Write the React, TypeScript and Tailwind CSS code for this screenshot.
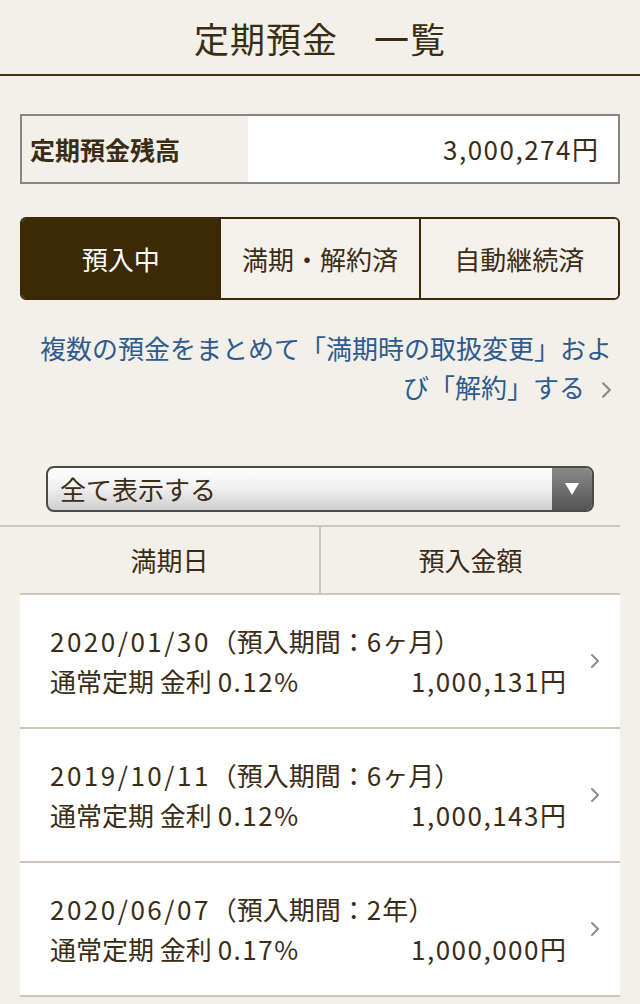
const font = {
  fontFamily: '"Noto Sans CJK JP", "Noto Sans", sans-serif',
};

const ROWS = [
  { date: '2020/01/30', term: '6', unit: 'ヶ月', rate: '0.12%', amount: '1,000,131' },
  { date: '2019/10/11', term: '6', unit: 'ヶ月', rate: '0.12%', amount: '1,000,143' },
  { date: '2020/06/07', term: '2', unit: '年', rate: '0.17%', amount: '1,000,000' },
];

function Chevron({ className }: { className?: string }) {
  return (
    <svg viewBox="0 0 10 16" className={className} fill="none">
      <path d="M2 2l6 6-6 6" stroke="#8c8c8c" strokeWidth="2" strokeLinecap="round" strokeLinejoin="round" />
    </svg>
  );
}

export default function App() {
  return (
    <div
      className="min-h-[1004px] w-[640px] bg-[#f3f0ea] text-[#3b2c15] antialiased"
      style={font}
    >
      {/* title */}
      <header className="flex h-[74px] items-center justify-center text-[35px] leading-none tracking-[1px]">
        定期預金　一覧
      </header>
      <div className="h-[2px] bg-[#4a3313]" />

      {/* balance */}
      <div className="mx-[20px] mt-[38px] flex h-[70px] border-2 border-[#8a8580]">
        <div className="flex w-[226px] items-center pl-[8px] text-[25px] font-bold leading-none">
          定期預金残高
        </div>
        <div className="flex flex-1 items-center justify-end bg-white pr-[20px] text-[26px] leading-none">
          <span className="tracking-[1.5px]">3,000,274</span>円
        </div>
      </div>

      {/* tabs */}
      <div className="mx-[20px] mt-[33px] flex h-[83px] overflow-hidden rounded-[6px] border-2 border-[#3a2806] text-[26px] leading-none">
        <div className="flex flex-1 items-center justify-center bg-[#3b2a05] text-white">預入中</div>
        <div className="flex flex-1 items-center justify-center border-l-2 border-[#3a2806] bg-[#f5f2ec]">
          満期・解約済
        </div>
        <div className="flex flex-1 items-center justify-center border-l-2 border-[#3a2806] bg-[#f5f2ec]">
          自動継続済
        </div>
      </div>

      {/* link */}
      <p className="ml-[34px] mr-[28px] mt-[28px] text-right text-[26px] leading-[39px] text-[#2e5b8f]">
        複数の預金をまとめて「満期時の取扱変更」および「解約」する
        <Chevron className="ml-[16px] inline-block h-[18px] w-[11px] align-[-1px]" />
      </p>

      {/* select */}
      <div className="mx-[46px] mt-[60px] flex h-[46px] overflow-hidden rounded-[8px] border-2 border-[#4a4a4a] bg-gradient-to-b from-white via-[#eeeeee] to-[#cfcfcf]">
        <div className="flex flex-1 items-center pl-[12px] text-[26px] leading-none">全て表示する</div>
        <div className="flex w-[40px] items-center justify-center bg-gradient-to-b from-[#8a8a8a] to-[#555555]">
          <svg viewBox="0 0 14 12" className="h-[12px] w-[14px]">
            <path d="M0 0h14L7 12z" fill="#fff" />
          </svg>
        </div>
      </div>

      {/* table header */}
      <div className="mr-[20px] mt-[13px] border-t-2 border-[#cdc6bb]">
        <div className="ml-[20px] flex h-[66px] text-[26px] leading-none">
          <div className="flex flex-1 items-center justify-center border-r-2 border-[#cdc6bb]">満期日</div>
          <div className="flex flex-1 items-center justify-center">預入金額</div>
        </div>
      </div>

      {/* rows */}
      <ul className="mx-[20px] border-t-2 border-[#cdc6bb]">
        {ROWS.map((r) => (
          <li
            key={r.date}
            className="flex h-[134px] items-center border-b-2 border-[#cdc6bb] bg-white pl-[30px] pr-[20px] text-[26px]"
          >
            <div className="flex-1 pr-[24px] leading-[40px]">
              <div>
                <span className="tracking-[2.5px]">{r.date}</span>（預入期間：
                <span className="tracking-[1px]">{r.term}</span>
                {r.unit}）
              </div>
              <div className="flex justify-between">
                <span>
                  通常定期 金利 <span className="tracking-[1.5px]">{r.rate}</span>
                </span>
                <span>
                  <span className="tracking-[1.5px]">{r.amount}</span>円
                </span>
              </div>
            </div>
            <Chevron className="h-[16px] w-[10px]" />
          </li>
        ))}
      </ul>
    </div>
  );
}
